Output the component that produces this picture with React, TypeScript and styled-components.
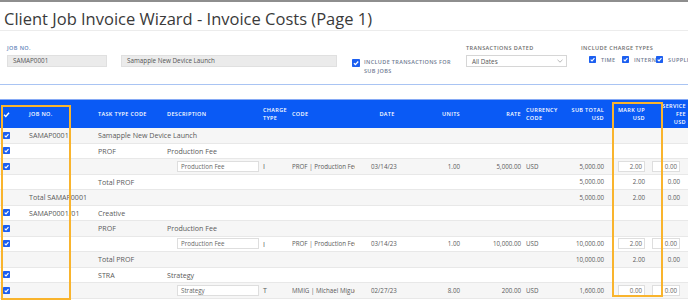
import React from 'react'
import styled, { createGlobalStyle } from 'styled-components'

const GlobalStyle = createGlobalStyle`
  body {
    margin: 0;
    background: #fff;
    font-family: 'Open Sans', 'Liberation Sans', sans-serif;
  }
`

// column widths, left to right: check, job, task, desc, charge, code, date,
// units, rate, currency, subtotal, markup, fee
const TEMPLATE = '26px 69px 69px 97px 28px 79px 35px 59px 61px 37px 46px 43px 41px'

const Page = styled.div`
  position: relative;
  width: 688px;
  height: 300px;
  overflow: hidden;
  border-top: 2px solid #8e8e8e;
  box-sizing: border-box;
`

const TitleBar = styled.div`
  height: 29px;
  padding: 6px 0 0 4px;
  box-sizing: border-box;
  border-bottom: 1px solid #ececec;
`

const Title = styled.h1`
  margin: 0;
  font-size: 16.5px;
  line-height: 22px;
  font-weight: 400;
  color: #3a3a3a;
  white-space: nowrap;
`

const FilterBar = styled.div`
  display: flex;
  gap: 15px;
  height: 54px;
  padding: 13px 0 0 7px;
  box-sizing: border-box;
  border-bottom: 1px solid #a9c4f3;
`

const Field = styled.div<{ $width: number; $top?: number }>`
  width: ${(p) => p.$width}px;
  padding-top: ${(p) => p.$top || 0}px;
  flex-shrink: 0;
`

const Label = styled.div<{ $tone?: 'blue' | 'gray' }>`
  font-size: 5.5px;
  line-height: 8px;
  font-weight: 600;
  letter-spacing: 0.4px;
  text-transform: uppercase;
  color: ${(p) => (p.$tone === 'blue' ? '#5f84b9' : '#6d6d6d')};
  margin-bottom: 3px;
  white-space: nowrap;
`

const InputRow = styled.div`
  display: flex;
  gap: 14px;
`

const ReadBox = styled.div<{ $width: number }>`
  width: ${(p) => p.$width}px;
  height: 12px;
  box-sizing: border-box;
  background: #ebebeb;
  border: 1px solid #e0e0e0;
  padding-left: 5px;
  font-size: 6.3px;
  line-height: 10px;
  color: #555;
`

const CheckLine = styled.div`
  display: flex;
  gap: 4px;
  align-items: flex-start;
`

const CheckText = styled.div`
  font-size: 5.5px;
  line-height: 9px;
  font-weight: 600;
  letter-spacing: 0.35px;
  color: #6f7a92;
  text-transform: uppercase;
  white-space: nowrap;
  margin-top: -1px;
`

const Select = styled.div`
  width: 101px;
  height: 12px;
  box-sizing: border-box;
  border: 1px solid #d6d6d6;
  background: #fff;
  display: flex;
  align-items: center;
  justify-content: space-between;
  padding: 0 3px 0 5px;
  font-size: 6.3px;
  color: #555;
`

const ChargeRow = styled.div`
  display: flex;
  padding: 0.5px 0 0 8px;
`

const ChargeItem = styled.div<{ $width: number }>`
  width: ${(p) => p.$width}px;
  display: flex;
  align-items: center;
  gap: 5px;
  overflow: hidden;
  flex-shrink: 0;
  font-size: 5.5px;
  font-weight: 600;
  letter-spacing: 0.4px;
  color: #6f7a92;
  white-space: nowrap;
  svg {
    flex-shrink: 0;
  }
`

const Spacer = styled.div`
  height: 14px;
`

const HeadRow = styled.div`
  display: grid;
  grid-template-columns: ${TEMPLATE};
  height: 29px;
  box-sizing: border-box;
  border-top: 1px solid #86aaf5;
  background: #0a5af5;
  align-items: center;
  color: #fff;
`

const HeadCell = styled.div<{ $align: string; $pl: number; $pr: number }>`
  padding: 0 ${(p) => p.$pr}px 0 ${(p) => p.$pl}px;
  font-size: 5.5px;
  line-height: 8px;
  font-weight: 600;
  letter-spacing: 0.35px;
  white-space: nowrap;
  display: flex;
  flex-direction: column;
  align-items: ${(p) =>
    p.$align === 'right' ? 'flex-end' : p.$align === 'center' ? 'center' : 'flex-start'};
`

const DataRow = styled.div<{ $shade: boolean }>`
  display: grid;
  grid-template-columns: ${TEMPLATE};
  height: 15.5px;
  box-sizing: border-box;
  border-bottom: 1px solid #e8e8e8;
  background: ${(p) => (p.$shade ? '#f6f6f6' : '#fff')};
  align-items: center;
  font-size: 7.1px;
  color: #5a5a5a;
`

const Cell = styled.div<{ $align: string; $pl: number; $pr: number; $small?: boolean }>`
  display: flex;
  justify-content: ${(p) => (p.$align === 'right' ? 'flex-end' : 'flex-start')};
  padding: 0 ${(p) => p.$pr}px 0 ${(p) => p.$pl}px;
  font-size: ${(p) => (p.$small ? '6.2px' : 'inherit')};
  white-space: nowrap;
  min-width: 0;
`

const Clip = styled.span<{ $width: number }>`
  display: block;
  max-width: ${(p) => p.$width}px;
  overflow: hidden;
`

const EditBox = styled.div<{ $width: number; $align: 'left' | 'right'; $ml?: number }>`
  width: ${(p) => p.$width}px;
  height: 11px;
  margin-left: ${(p) => p.$ml || 0}px;
  box-sizing: border-box;
  border: 1px solid #dedede;
  background: #fff;
  font-size: 6.2px;
  line-height: 9px;
  color: #666;
  text-align: ${(p) => p.$align};
  padding: 0 2px 0 3px;
  flex-shrink: 0;
`

const Marker = styled.div<{ $x: number; $y: number; $w: number; $h: number }>`
  position: absolute;
  left: ${(p) => p.$x}px;
  top: ${(p) => p.$y}px;
  width: ${(p) => p.$w}px;
  height: ${(p) => p.$h}px;
  box-sizing: border-box;
  border: 2px solid #f9b42d;
  pointer-events: none;
`

const Tick = ({ size = 7 }: { size?: number }) => (
  <svg width={size} height={size} viewBox="0 0 10 10">
    <rect width="10" height="10" rx="1" fill="#1c5ff0" />
    <path d="M2.4 5.3 L4.3 7.1 L7.8 3.1" stroke="#fff" strokeWidth="1.6" fill="none" />
  </svg>
)

const HeadTick = () => (
  <svg width="7" height="7" viewBox="0 0 10 10">
    <path d="M1.5 5.4 L4 7.8 L8.6 2.4" stroke="#fff" strokeWidth="2" fill="none" />
  </svg>
)

const Chevron = () => (
  <svg width="6" height="4" viewBox="0 0 6 4">
    <path d="M0.5 0.8 L3 3.2 L5.5 0.8" stroke="#999" strokeWidth="0.7" fill="none" />
  </svg>
)

type Col = {
  label: string[]
  align: 'left' | 'right' | 'center'
  pl: number
  pr: number
  dataPr?: number
  small?: boolean
}

const COLS: Col[] = [
  { label: [], align: 'left', pl: 3, pr: 0 },
  { label: ['JOB NO.'], align: 'left', pl: 3, pr: 0 },
  { label: ['TASK TYPE CODE'], align: 'left', pl: 3, pr: 0 },
  { label: ['DESCRIPTION'], align: 'left', pl: 3, pr: 0 },
  { label: ['CHARGE', 'TYPE'], align: 'left', pl: 2, pr: 0 },
  { label: ['CODE'], align: 'left', pl: 3, pr: 0, small: true },
  { label: ['DATE'], align: 'center', pl: 3, pr: 0, small: true },
  { label: ['UNITS'], align: 'right', pl: 0, pr: 2, small: true },
  { label: ['RATE'], align: 'right', pl: 0, pr: 2, small: true },
  { label: ['CURRENCY', 'CODE'], align: 'left', pl: 3, pr: 0, small: true },
  { label: ['SUB TOTAL', 'USD'], align: 'right', pl: 0, pr: 2, small: true },
  { label: ['MARK UP', 'USD'], align: 'right', pl: 0, pr: 4, small: true },
  { label: ['SERVICE', 'FEE', 'USD'], align: 'right', pl: 0, pr: 4, dataPr: 10, small: true },
]

type Line = {
  check?: boolean
  job?: string
  task?: string
  desc?: string
  descEdit?: string
  charge?: string
  code?: string
  date?: string
  units?: string
  rate?: string
  currency?: string
  subtotal?: string
  markup?: string
  markupEdit?: boolean
  fee?: string
  feeEdit?: boolean
}

const LINES: Line[] = [
  { check: true, job: 'SAMAP0001', task: 'Samapple New Device Launch' },
  { check: true, task: 'PROF', desc: 'Production Fee' },
  {
    check: true, descEdit: 'Production Fee', charge: 'I', code: 'PROF | Production Fee',
    date: '03/14/23', units: '1.00', rate: '5,000.00', currency: 'USD', subtotal: '5,000.00',
    markup: '2.00', markupEdit: true, fee: '0.00', feeEdit: true,
  },
  { task: 'Total PROF', subtotal: '5,000.00', markup: '2.00', fee: '0.00' },
  { job: 'Total SAMAP0001', subtotal: '5,000.00', markup: '2.00', fee: '0.00' },
  { check: true, job: 'SAMAP0001/01', task: 'Creative' },
  { check: true, task: 'PROF', desc: 'Production Fee' },
  {
    check: true, descEdit: 'Production Fee', charge: 'I', code: 'PROF | Production Fee',
    date: '03/14/23', units: '1.00', rate: '10,000.00', currency: 'USD', subtotal: '10,000.00',
    markup: '2.00', markupEdit: true, fee: '0.00', feeEdit: true,
  },
  { task: 'Total PROF', subtotal: '10,000.00', markup: '2.00', fee: '0.00' },
  { check: true, task: 'STRA', desc: 'Strategy' },
  {
    check: true, descEdit: 'Strategy', charge: 'T', code: 'MMIG | Michael Miguel',
    date: '02/27/23', units: '8.00', rate: '200.00', currency: 'USD', subtotal: '1,600.00',
    markup: '0.00', markupEdit: true, fee: '0.00', feeEdit: true,
  },
]

const cellsFor = (l: Line): React.ReactNode[] => [
  l.check ? <Tick /> : null,
  l.job,
  l.task,
  l.descEdit ? (
    <EditBox $width={82} $align="left" $ml={10}>
      {l.descEdit}
    </EditBox>
  ) : (
    l.desc
  ),
  l.charge,
  l.code ? <Clip $width={63}>{l.code}</Clip> : null,
  l.date,
  l.units,
  l.rate,
  l.currency,
  l.subtotal,
  l.markupEdit ? <EditBox $width={27} $align="right">{l.markup}</EditBox> : l.markup,
  l.feeEdit ? <EditBox $width={28} $align="right">{l.fee}</EditBox> : l.fee,
]

const App = () => (
  <>
    <GlobalStyle />
    <Page>
      <TitleBar>
        <Title>Client Job Invoice Wizard - Invoice Costs (Page 1)</Title>
      </TitleBar>

      <FilterBar>
        <Field $width={330}>
          <Label $tone="blue">Job No.</Label>
          <InputRow>
            <ReadBox $width={100}>SAMAP0001</ReadBox>
            <ReadBox $width={216}>Samapple New Device Launch</ReadBox>
          </InputRow>
        </Field>
        <Field $width={99} $top={15}>
          <CheckLine>
            <Tick size={8} />
            <CheckText>
              Include transactions for
              <br />
              sub jobs
            </CheckText>
          </CheckLine>
        </Field>
        <Field $width={100}>
          <Label>Transactions Dated</Label>
          <Select>
            All Dates
            <Chevron />
          </Select>
        </Field>
        <Field $width={110}>
          <Label>Include Charge Types</Label>
          <ChargeRow>
            <ChargeItem $width={33}>
              <Tick size={7} />
              TIME
            </ChargeItem>
            <ChargeItem $width={34}>
              <Tick size={7} />
              INTERNAL
            </ChargeItem>
            <ChargeItem $width={40}>
              <Tick size={7} />
              SUPPLIER
            </ChargeItem>
          </ChargeRow>
        </Field>
      </FilterBar>

      <Spacer />

      <HeadRow>
        {COLS.map((c, i) => (
          <HeadCell key={i} $align={c.align} $pl={c.pl} $pr={c.pr}>
            {i === 0 ? <HeadTick /> : c.label.map((t) => <span key={t}>{t}</span>)}
          </HeadCell>
        ))}
      </HeadRow>

      {LINES.map((l, r) => (
        <DataRow key={r} $shade={r % 2 === 0}>
          {cellsFor(l).map((v, i) => {
            const c = COLS[i]
            return (
              <Cell
                key={i}
                $align={c.align === 'right' ? 'right' : 'left'}
                $pl={c.align === 'right' ? 0 : c.pl}
                $pr={c.dataPr ?? c.pr}
                $small={c.small}
              >
                {v}
              </Cell>
            )
          })}
        </DataRow>
      ))}

      <Marker $x={1} $y={103} $w={70} $h={195} />
      <Marker $x={612} $y={100} $w={51} $h={195} />
    </Page>
  </>
)

export default App
